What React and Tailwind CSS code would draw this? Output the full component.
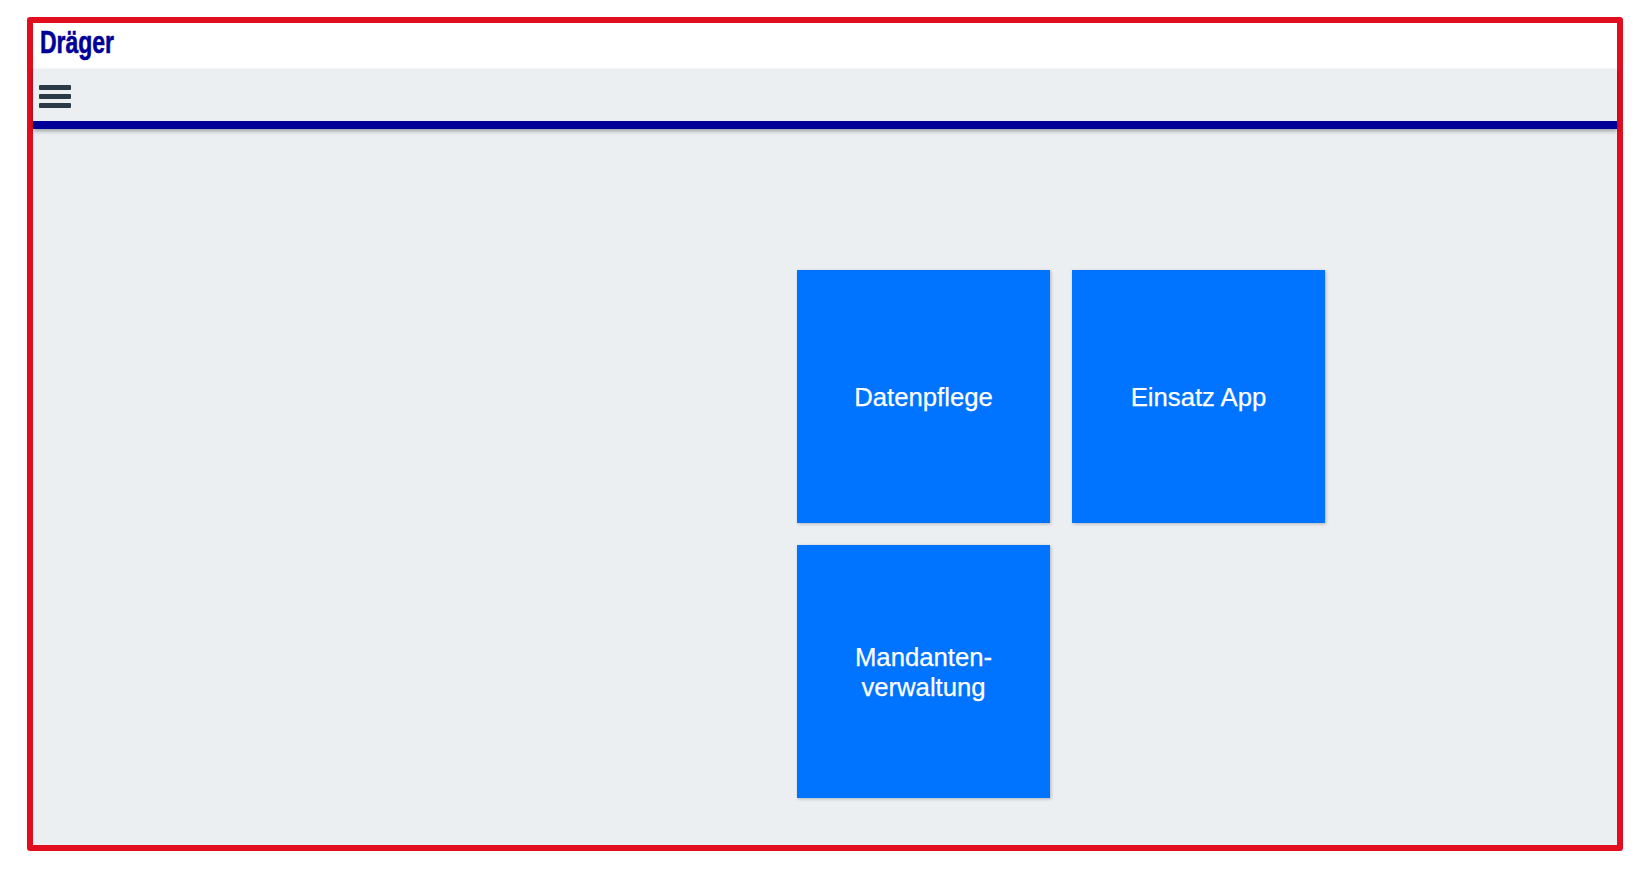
import React from "react";

const tiles = [
    { key: "daten", label: "Datenpflege" },
    { key: "einsatz", label: "Einsatz App" },
    { key: "mandant", label: <>Mandanten-<br />verwaltung</> },
];

function Logo() {
    return (
        <svg width="110" height="44" viewBox="0 0 110 44" className="block">
            <text
                x="1"
                y="29"
                textLength="74"
                lengthAdjust="spacingAndGlyphs"
                fontFamily="'Liberation Sans', Arial, sans-serif"
                fontWeight="700"
                fontSize="32"
                fill="#000099"
                stroke="#000099"
                strokeWidth="0.6"
            >
                Dräger
            </text>
        </svg>
    );
}

export default function App() {
    return (
        <div className="h-[874px] w-[1647px] overflow-hidden bg-white pl-[27px] pt-[17px] font-['Liberation_Sans',Arial,sans-serif]">
            <div className="flex h-[834px] w-[1596px] flex-col rounded-[3px] border-[6px] border-[#e10e20] bg-[#ebeff2]">
                {/* Header */}
                <div className="h-[46px] bg-white pl-[6px] pt-[1px]">
                    <Logo />
                </div>

                {/* Menu bar */}
                <div className="h-[60px] shrink-0 border-b-[8px] border-[#000099] shadow-[0_2px_4px_rgba(0,0,0,0.35)]">
                    <div className="flex w-[32px] translate-x-[6px] translate-y-[16px] flex-col gap-[4px]">
                        <div className="h-[5px] rounded-[1px] bg-[#2b3a47]"></div>
                        <div className="h-[5px] rounded-[1px] bg-[#2b3a47]"></div>
                        <div className="h-[5px] rounded-[1px] bg-[#2b3a47]"></div>
                    </div>
                </div>

                {/* Tiles */}
                <div className="ml-[764px] mt-[141px] grid w-[528px] grid-cols-[253px_253px] gap-[22px]">
                    {tiles.map((tile) => (
                        <div
                            key={tile.key}
                            className="flex h-[253px] items-center justify-center bg-[#0073ff] pt-[1px] text-center text-[25.7px] leading-[30.5px] text-white shadow-[1px_1px_3px_rgba(0,0,0,0.25)] [-webkit-text-stroke:0.25px_white]"
                        >
                            <span>{tile.label}</span>
                        </div>
                    ))}
                </div>
            </div>
        </div>
    );
}
